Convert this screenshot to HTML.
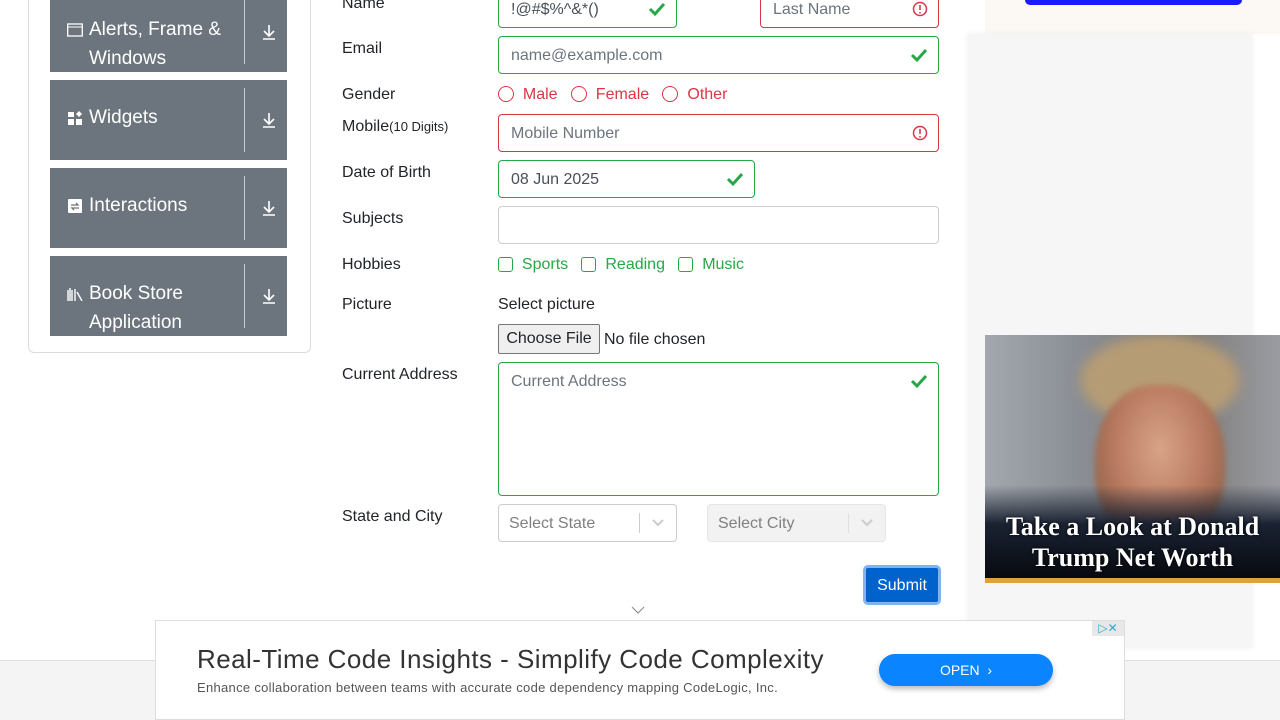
<!DOCTYPE html>
<html><head><meta charset="utf-8"><style>
*{box-sizing:border-box;margin:0;padding:0}
body{width:1280px;height:720px;overflow:hidden;position:relative;background:#fff;font-family:"Liberation Sans",sans-serif;color:#212529;font-size:16px}
.a{position:absolute}
.card{left:28px;top:-10px;width:283px;height:363px;border:1px solid #dcdcdc;border-radius:0 0 6px 6px}
.item{left:50px;width:237px;background:#6c757d;color:#fff;font-size:19px;line-height:29px}
.item .t{position:absolute;left:39px}
.item .ic{position:absolute;left:17px;width:16px;height:14px}
.item .dv{position:absolute;left:194px;width:1px;background:#c7cbcf}
.item .dl{position:absolute;left:211px;width:16px;height:18px}
.lbl{left:342px;font-size:16px}
.in{border:1px solid #28a745;border-radius:4px;height:38px;font-size:16px;color:#6c757d;padding-left:12px;line-height:38px}
.red{border-color:#dc3545}
.chk{position:absolute;right:10px;top:10px}
.rl{color:#dc3545}
.gl{color:#28a745}
</style></head><body>
<div class="a card"></div>
<div class="a item" style="top:0;height:72px"><svg class="ic" style="top:23px" viewBox="0 0 16 14"><rect x=".7" y="1" width="14.6" height="12" fill="none" stroke="#fff" stroke-width="1.3"/><line x1="1" y1="4" x2="15" y2="4" stroke="#fff"/></svg><div class="t" style="top:15px">Alerts, Frame &amp;<br>Windows</div><div class="dv" style="top:0;height:64px"></div><svg class="dl" style="top:23px" viewBox="0 0 16 18"><path d="M8 2v11M3 8l5 5 5-5M2 16h12" stroke="#fff" stroke-width="1.6" fill="none"/></svg></div>
<div class="a item" style="top:80px;height:80px"><svg class="ic" style="top:31px" viewBox="0 0 16 14"><rect x="1" y="1" width="6" height="5" fill="#fff"/><rect x="1" y="8" width="6" height="6" fill="#fff"/><rect x="9" y="8" width="6" height="6" fill="#fff"/><path d="M12 0l3 3-3 3-3-3z" fill="#fff"/></svg><div class="t" style="top:23px">Widgets</div><div class="dv" style="top:8px;height:64px"></div><svg class="dl" style="top:31px" viewBox="0 0 16 18"><path d="M8 2v11M3 8l5 5 5-5M2 16h12" stroke="#fff" stroke-width="1.6" fill="none"/></svg></div>
<div class="a item" style="top:168px;height:80px"><svg class="ic" style="top:31px" viewBox="0 0 16 14"><rect x="1" y="0" width="14" height="14" rx="1" fill="#fff"/><path d="M4 6h7l-2-2M12 9H5l2 2" stroke="#6c757d" stroke-width="1.3" fill="none"/></svg><div class="t" style="top:23px">Interactions</div><div class="dv" style="top:8px;height:64px"></div><svg class="dl" style="top:31px" viewBox="0 0 16 18"><path d="M8 2v11M3 8l5 5 5-5M2 16h12" stroke="#fff" stroke-width="1.6" fill="none"/></svg></div>
<div class="a item" style="top:256px;height:80px"><svg class="ic" style="top:31px" viewBox="0 0 16 14"><path d="M1 3v11M3 1v13M5 3v11M8 2v12M10 5l5 9" stroke="#fff" stroke-width="1.4" fill="none"/></svg><div class="t" style="top:23px">Book Store<br>Application</div><div class="dv" style="top:8px;height:64px"></div><svg class="dl" style="top:31px" viewBox="0 0 16 18"><path d="M8 2v11M3 8l5 5 5-5M2 16h12" stroke="#fff" stroke-width="1.6" fill="none"/></svg></div>

<div class="a lbl" style="top:-5px">Name</div>
<div class="a in" style="left:498px;top:-10px;width:179px;color:#495057">!@#$%^&amp;*()<svg class="chk" width="18" height="16" viewBox="0 0 18 16"><path d="M2 8l5 5L16 3" stroke="#28a745" stroke-width="3" fill="none"/></svg></div>
<div class="a in red" style="left:760px;top:-10px;width:179px">Last Name<svg class="chk" width="16" height="16" viewBox="0 0 16 16"><circle cx="8" cy="8" r="6.5" stroke="#dc3545" stroke-width="1.5" fill="none"/><path d="M8 4v5M8 11v1.5" stroke="#dc3545" stroke-width="1.6"/></svg></div>

<div class="a lbl" style="top:40px">Email</div>
<div class="a in" style="left:498px;top:36px;width:441px">name@example.com<svg class="chk" width="18" height="16" viewBox="0 0 18 16"><path d="M2 8l5 5L16 3" stroke="#28a745" stroke-width="3" fill="none"/></svg></div>

<div class="a lbl" style="top:86px">Gender</div>
<div class="a rl" style="left:498px;top:86px;white-space:nowrap"><span style="display:inline-block;width:16px;height:16px;border:1px solid #dc3545;border-radius:50%;vertical-align:-3px"></span>&nbsp; Male&nbsp;&nbsp; <span style="display:inline-block;width:16px;height:16px;border:1px solid #dc3545;border-radius:50%;vertical-align:-3px"></span>&nbsp; Female&nbsp;&nbsp; <span style="display:inline-block;width:16px;height:16px;border:1px solid #dc3545;border-radius:50%;vertical-align:-3px"></span>&nbsp; Other</div>

<div class="a lbl" style="top:118px">Mobile<span style="font-size:13px">(10 Digits)</span></div>
<div class="a in red" style="left:498px;top:114px;width:441px">Mobile Number<svg class="chk" width="16" height="16" viewBox="0 0 16 16"><circle cx="8" cy="8" r="6.5" stroke="#dc3545" stroke-width="1.5" fill="none"/><path d="M8 4v5M8 11v1.5" stroke="#dc3545" stroke-width="1.6"/></svg></div>

<div class="a lbl" style="top:164px">Date of Birth</div>
<div class="a in" style="left:498px;top:160px;width:257px;color:#495057">08 Jun 2025<svg class="chk" width="18" height="16" viewBox="0 0 18 16"><path d="M2 8l5 5L16 3" stroke="#28a745" stroke-width="3" fill="none"/></svg></div>

<div class="a lbl" style="top:210px">Subjects</div>
<div class="a in" style="left:498px;top:206px;width:441px;border-color:#ccc"></div>

<div class="a lbl" style="top:256px">Hobbies</div>
<div class="a gl" style="left:498px;top:256px;white-space:nowrap"><span style="display:inline-block;width:15px;height:15px;border:1px solid #28a745;border-radius:3px;vertical-align:-3px"></span>&nbsp; Sports&nbsp;&nbsp; <span style="display:inline-block;width:15px;height:15px;border:1px solid #28a745;border-radius:3px;vertical-align:-3px"></span>&nbsp; Reading&nbsp;&nbsp; <span style="display:inline-block;width:15px;height:15px;border:1px solid #28a745;border-radius:3px;vertical-align:-3px"></span>&nbsp; Music</div>

<div class="a lbl" style="top:296px">Picture</div>
<div class="a" style="left:498px;top:296px">Select picture</div>
<div class="a" style="left:498px;top:324px;width:102px;height:30px;border:1px solid #767676;background:#efefef;border-radius:2px;text-align:center;line-height:28px">Choose File</div>
<div class="a" style="left:604px;top:331px">No file chosen</div>

<div class="a lbl" style="top:366px">Current Address</div>
<div class="a in" style="left:498px;top:362px;width:441px;height:134px;line-height:normal;padding-top:10px">Current Address<svg class="chk" width="18" height="16" viewBox="0 0 18 16"><path d="M2 8l5 5L16 3" stroke="#28a745" stroke-width="3" fill="none"/></svg></div>

<div class="a lbl" style="top:508px">State and City</div>
<div class="a in" style="left:498px;top:504px;width:179px;border-color:#ccc;color:#808080;padding-left:10px">Select State<div class="a" style="left:140px;top:8px;width:1px;height:20px;background:#ccc"></div><svg class="a" style="left:152px;top:13px" width="14" height="10" viewBox="0 0 14 10"><path d="M2 2l5 5 5-5" stroke="#ccc" stroke-width="2" fill="none"/></svg></div>
<div class="a in" style="left:707px;top:504px;width:179px;border-color:#e6e6e6;background:#f2f2f2;color:#808080;padding-left:10px">Select City<div class="a" style="left:140px;top:8px;width:1px;height:20px;background:#e0e0e0"></div><svg class="a" style="left:152px;top:13px" width="14" height="10" viewBox="0 0 14 10"><path d="M2 2l5 5 5-5" stroke="#ccc" stroke-width="2" fill="none"/></svg></div>

<div class="a" style="left:863px;top:565px;width:78px;height:40px;background:#0062cc;border:3px solid #80b3f0;border-radius:5px;color:#fff;text-align:center;line-height:35px">Submit</div>
<svg class="a" style="left:631px;top:606px" width="14" height="8" viewBox="0 0 14 8"><path d="M1 1l6 6 6-6" stroke="#888" fill="none"/></svg>

<!-- right -->
<div class="a" style="left:985px;top:0;width:295px;height:34px;background:#fcf8f3"></div>
<div class="a" style="left:1025px;top:-10px;width:217px;height:15px;background:#1a1aff;border-radius:5px"></div>
<div class="a" style="left:968px;top:34px;width:284px;height:614px;background:#f6f6f6;box-shadow:0 0 6px #eee"></div>
<div class="a" style="left:985px;top:335px;width:295px;height:248px;background:linear-gradient(90deg,#a3a7ae 0%,#8b8f96 30%,#7e7c7a 70%,#9a9ca2 100%);overflow:hidden">
<div class="a" style="left:95px;top:0;width:160px;height:90px;border-radius:50%;background:#b69c74;filter:blur(6px)"></div>
<div class="a" style="left:110px;top:50px;width:130px;height:160px;border-radius:45%;background:radial-gradient(ellipse at 50% 40%,#d8a488 0%,#b97a60 50%,#8d6048 85%);filter:blur(3px)"></div>
<div class="a" style="left:0;top:150px;width:295px;height:98px;background:linear-gradient(180deg,rgba(10,13,20,0) 0%,#1a2232 40%,#05070c 100%)"></div>
<div class="a" style="left:0;top:176px;width:295px;text-align:center;color:#fff;font-family:'Liberation Serif',serif;font-weight:bold;font-size:26px;line-height:31px;text-shadow:0 0 3px #000">Take a Look at Donald<br>Trump Net Worth</div>
<div class="a" style="left:0;top:243px;width:295px;height:5px;background:#d9a43a"></div>
</div>

<!-- bottom -->
<div class="a" style="left:0;top:660px;width:1280px;height:60px;background:#f4f4f4;border-top:1px solid #ddd"></div>
<div class="a" style="left:155px;top:620px;width:970px;height:100px;background:#fff;border:1px solid #ddd"></div>
<div class="a" style="left:1092px;top:621px;width:32px;height:15px;background:#e8e8e8;color:#2aa8d8;font-size:12px;line-height:15px;text-align:center">▷✕</div>
<div class="a" style="left:197px;top:644px;font-size:26px;color:#333;letter-spacing:0.45px">Real-Time Code Insights - Simplify Code Complexity</div>
<div class="a" style="left:197px;top:680px;font-size:13px;color:#555;letter-spacing:0.3px">Enhance collaboration between teams with accurate code dependency mapping CodeLogic, Inc.</div>
<div class="a" style="left:879px;top:654px;width:174px;height:32px;background:#0a84ff;border-radius:16px;color:#fff;font-size:14px;text-align:center;line-height:32px;box-shadow:0 3px 6px #bbb">OPEN &nbsp;›</div>
</body></html>
